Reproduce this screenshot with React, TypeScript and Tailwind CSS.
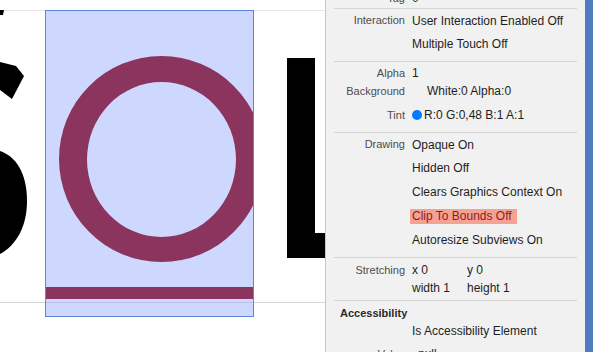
import React from "react";

const font = { fontFamily: '"Liberation Sans", Arial, sans-serif' };

function Sep() {
  return <div className="mx-[8px] h-px shrink-0 bg-[#d5d5d5]" />;
}

function Row({
  label,
  h,
  children,
  className = "",
}: {
  label?: string;
  h: string;
  children?: React.ReactNode;
  className?: string;
}) {
  return (
    <div className={`flex shrink-0 items-center ${h} ${className}`}>
      <div className="w-[79px] shrink-0 text-right text-[11px] leading-none text-[#4d4d4d]">
        {label}
      </div>
      <div className="flex items-center pl-[7px] text-[12px] leading-none text-[#1e1e1e]">
        {children}
      </div>
    </div>
  );
}

export default function App() {
  return (
    <div className="flex h-[352px] w-[593px] overflow-hidden" style={font}>
      {/* Canvas */}
      <div className="relative h-full w-[325px] shrink-0 overflow-hidden bg-white">
        <div className="absolute left-0 right-0 top-[10px] h-px bg-[#e6e6e6]" />
        <div className="absolute left-0 right-0 top-[302px] h-px bg-[#d6d6d6]" />
        {/* S and L glyph fragments */}
        <svg className="absolute left-0 top-0" width="325" height="352">
          <path d="M0 10 L4 10 L3 15 L0 15 Z" fill="#000" />
          <path d="M0 62 L16 66 L24 76 L12 99 L0 90 Z" fill="#000" />
          <path d="M0 151 C15 156 27 172 27 201 C27 228 15 246 0 254 Z" fill="#000" />
          <rect x="287" y="58" width="28" height="200" fill="#000" />
          <rect x="315" y="233" width="10" height="25" fill="#000" />
        </svg>
        {/* selected view */}
        <div className="absolute left-[45px] top-[10px] h-[307px] w-[209px] overflow-hidden border border-[#5a87d7] bg-[rgba(150,170,250,0.47)]">
          <svg className="absolute left-[-1px] top-[-1px]" width="209" height="307">
            <path
              fillRule="evenodd"
              fill="#8b345e"
              d="M14 149 A102.5 103 0 1 0 219 149 A102.5 103 0 1 0 14 149 Z M42 149.5 A74.5 77.5 0 1 1 191 149.5 A74.5 77.5 0 1 1 42 149.5 Z"
            />
            <rect x="1" y="277" width="207" height="12" fill="#8b345e" />
          </svg>
        </div>
      </div>
      <div className="h-full w-px shrink-0 bg-[#c6c6c6]" />
      {/* Inspector panel */}
      <div className="flex h-full w-[259px] shrink-0 flex-col overflow-hidden bg-[#f1f1f1]">
        <Row label="Tag" h="h-[16px]" className="-mt-[10px]">
          0
        </Row>
        <div className="mt-[2px]" />
        <Sep />
        <Row label="Interaction" h="h-[23px]">
          User Interaction Enabled Off
        </Row>
        <Row h="h-[24px]">Multiple Touch Off</Row>
        <div className="mt-[5px]" />
        <Sep />
        <Row label="Alpha" h="h-[18px]" className="mt-[2px]">
          1
        </Row>
        <Row label="Background" h="h-[18px]">
          <span className="pl-[15px]">White:0 Alpha:0</span>
        </Row>
        <Row label="Tint" h="h-[24px]" className="mt-[3px]">
          <span className="mr-[2px] inline-block h-[10px] w-[10px] rounded-full bg-[#007aff]" />
          R:0 G:0,48 B:1 A:1
        </Row>
        <div className="mt-[5px]" />
        <Sep />
        <Row label="Drawing" h="h-[23px]">
          Opaque On
        </Row>
        <Row h="h-[24px]">Hidden Off</Row>
        <Row h="h-[24px]">Clears Graphics Context On</Row>
        <Row h="h-[24px]">
          <span className="-ml-[2px] flex h-[15px] items-center bg-[#f5a294] pl-[2px] pr-[5px] text-[#8a1f1a]">
            Clip To Bounds Off
          </span>
        </Row>
        <Row h="h-[24px]">Autoresize Subviews On</Row>
        <div className="mt-[5px]" />
        <Sep />
        <Row label="Stretching" h="h-[18px]" className="mt-[3px]">
          <span className="w-[55px]">x 0</span>
          <span>y 0</span>
        </Row>
        <Row h="h-[17px]">
          <span className="w-[55px]">width 1</span>
          <span>height 1</span>
        </Row>
        <div className="mt-[4px]" />
        <Sep />
        <div className="flex h-[24px] shrink-0 items-center pl-[14px] text-[11px] font-bold leading-none text-[#2a2a2a]">
          Accessibility
        </div>
        <Row h="h-[12px]">Is Accessibility Element</Row>
        <Row label="Value" h="h-[34px]">
          <span className="pl-[6px]">null</span>
        </Row>
      </div>
      <div className="h-full w-[8px] shrink-0 bg-[#4d7cc0]" />
    </div>
  );
}
